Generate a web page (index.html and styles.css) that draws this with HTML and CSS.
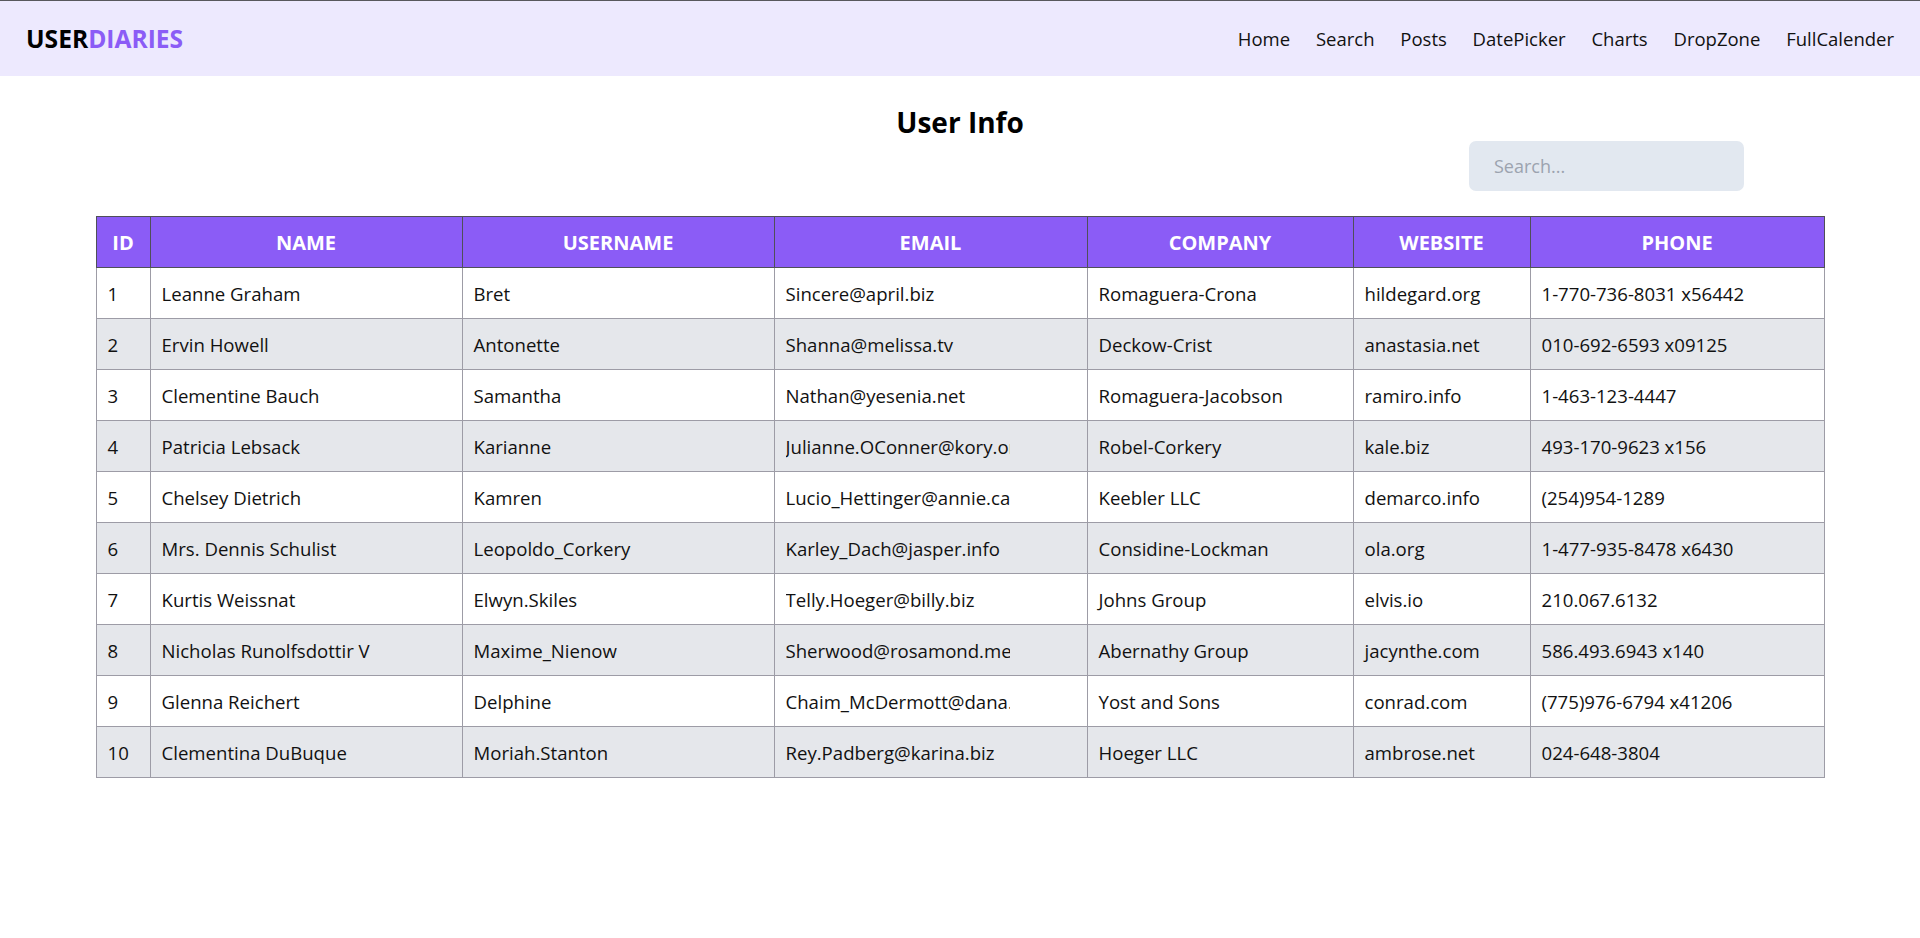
FILE: index.html
```html
<!DOCTYPE html>
<html lang="en">
<head>
<meta charset="utf-8">
<title>UserDiaries - User Info</title>
<link rel="stylesheet" href="styles.css">
</head>
<body>
<header class="navbar">
  <div class="logo">USER<span class="logo-accent">DIARIES</span></div>
  <nav class="nav-links">
    <a href="#">Home</a>
    <a href="#">Search</a>
    <a href="#">Posts</a>
    <a href="#">DatePicker</a>
    <a href="#">Charts</a>
    <a href="#">DropZone</a>
    <a href="#">FullCalender</a>
  </nav>
</header>
<main class="content">
  <h1 class="title">User Info</h1>
  <div class="search-row">
    <input class="search" type="text" placeholder="Search...">
  </div>
  <table class="users">
    <colgroup>
      <col class="c-id"><col class="c-name"><col class="c-user"><col class="c-email"><col class="c-company"><col class="c-web"><col class="c-phone">
    </colgroup>
    <thead>
      <tr><th>ID</th><th>Name</th><th>Username</th><th>Email</th><th>Company</th><th>Website</th><th>Phone</th></tr>
    </thead>
    <tbody>
      <tr><td>1</td><td>Leanne Graham</td><td>Bret</td><td><div class="clip">Sincere@april.biz</div></td><td>Romaguera-Crona</td><td>hildegard.org</td><td>1-770-736-8031 x56442</td></tr>
      <tr><td>2</td><td>Ervin Howell</td><td>Antonette</td><td><div class="clip">Shanna@melissa.tv</div></td><td>Deckow-Crist</td><td>anastasia.net</td><td>010-692-6593 x09125</td></tr>
      <tr><td>3</td><td>Clementine Bauch</td><td>Samantha</td><td><div class="clip">Nathan@yesenia.net</div></td><td>Romaguera-Jacobson</td><td>ramiro.info</td><td>1-463-123-4447</td></tr>
      <tr><td>4</td><td>Patricia Lebsack</td><td>Karianne</td><td><div class="clip">Julianne.OConner@kory.org</div></td><td>Robel-Corkery</td><td>kale.biz</td><td>493-170-9623 x156</td></tr>
      <tr><td>5</td><td>Chelsey Dietrich</td><td>Kamren</td><td><div class="clip">Lucio_Hettinger@annie.ca</div></td><td>Keebler LLC</td><td>demarco.info</td><td>(254)954-1289</td></tr>
      <tr><td>6</td><td>Mrs. Dennis Schulist</td><td>Leopoldo_Corkery</td><td><div class="clip">Karley_Dach@jasper.info</div></td><td>Considine-Lockman</td><td>ola.org</td><td>1-477-935-8478 x6430</td></tr>
      <tr><td>7</td><td>Kurtis Weissnat</td><td>Elwyn.Skiles</td><td><div class="clip">Telly.Hoeger@billy.biz</div></td><td>Johns Group</td><td>elvis.io</td><td>210.067.6132</td></tr>
      <tr><td>8</td><td>Nicholas Runolfsdottir V</td><td>Maxime_Nienow</td><td><div class="clip">Sherwood@rosamond.me</div></td><td>Abernathy Group</td><td>jacynthe.com</td><td>586.493.6943 x140</td></tr>
      <tr><td>9</td><td>Glenna Reichert</td><td>Delphine</td><td><div class="clip">Chaim_McDermott@dana.io</div></td><td>Yost and Sons</td><td>conrad.com</td><td>(775)976-6794 x41206</td></tr>
      <tr><td>10</td><td>Clementina DuBuque</td><td>Moriah.Stanton</td><td><div class="clip">Rey.Padberg@karina.biz</div></td><td>Hoeger LLC</td><td>ambrose.net</td><td>024-648-3804</td></tr>
    </tbody>
  </table>
</main>
</body>
</html>
```
FILE: styles.css
```css
* { box-sizing: border-box; }
html, body { margin: 0; padding: 0; }
body {
  font-family: "Open Sans", "Noto Sans", sans-serif;
  color: #111;
  background: #fff;
  border-top: 1px solid #58585c;
}
.navbar {
  display: flex;
  align-items: center;
  justify-content: space-between;
  height: 75px;
  padding: 0 26px;
  background: #ede9fe;
}
.logo {
  font-size: 24.6px;
  font-weight: 700;
  color: #000;
}
.logo-accent { color: #8b5cf6; }
.nav-links {
  display: flex;
  gap: 25.8px;
}
.nav-links a {
  color: #111;
  text-decoration: none;
  font-size: 18.5px;
}
.content { padding-top: 28px; }
.title {
  margin: 0;
  text-align: center;
  font-size: 28px;
  line-height: 36px;
  font-weight: 700;
  color: #000;
}
.search-row {
  display: flex;
  justify-content: flex-end;
  padding-right: 176px;
  margin-top: 1px;
}
.search {
  width: 275px;
  height: 50px;
  border: none;
  border-radius: 7px;
  background: #e2e8f0;
  padding: 0 25px;
  font-family: inherit;
  font-size: 18px;
  color: #111;
  outline: none;
}
.search::placeholder { color: #9ca3af; }
.users {
  width: 90%;
  margin: 25px auto 0;
  border-collapse: collapse;
  table-layout: fixed;
  font-size: 18.6px;
}
.c-id { width: 54px; }
.c-name { width: 312px; }
.c-user { width: 312px; }
.c-email { width: 313px; }
.c-company { width: 266px; }
.c-web { width: 177px; }
.c-phone { width: 294px; }
.users th {
  background: #8b5cf6;
  color: #fff;
  font-size: 20px;
  font-weight: 700;
  text-transform: uppercase;
  text-align: center;
  padding: 13px 4px 11px;
  line-height: 26px;
  border: 1px solid #4f4f58;
}
.users td {
  padding: 13px 11px 11px;
  line-height: 26px;
  border: 1px solid #9d9ca6;
  white-space: nowrap;
  overflow: hidden;
  color: #111;
}
.users tbody tr:nth-child(even) td { background: #e5e7eb; }
.clip {
  width: 224px;
  overflow: hidden;
  white-space: nowrap;
}
```
